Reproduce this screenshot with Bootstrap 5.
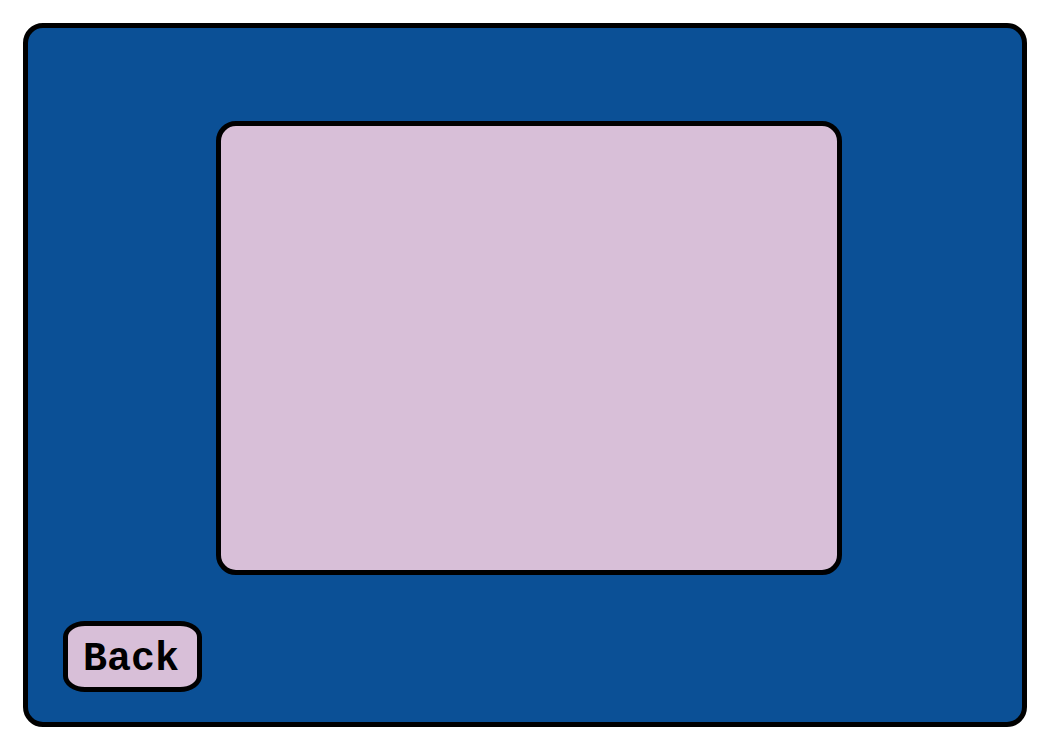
<!DOCTYPE html>
<html lang="en">
<head>
<meta charset="utf-8">
<meta name="viewport" content="width=device-width, initial-scale=1">
<title>Back</title>
<link href="https://cdn.jsdelivr.net/npm/bootstrap@5.3.0/dist/css/bootstrap.min.css" rel="stylesheet">
<style>
  .screen { padding: 23px; background: #fff; }
  .game-frame {
    padding: 93px 180px 30px 188px;
    background: #0b5096;
    border: 5px solid #000;
    border-radius: 20px;
  }
  .stage {
    background: #d8bfd8;
    border: 5px solid #000;
    border-radius: 20px;
    margin-bottom: 46px;
  }
  .back-row { margin-left: -153px; }
  .btn-back {
    padding: 11px 18px 5px 15px;
    background: #d8bfd8;
    color: #000;
    border: 5px solid #000;
    border-radius: 22px / 16px;
    font: bold 40px/45px "Liberation Mono", monospace;
  }
  .btn-back:hover, .btn-back:active { background: #e6d3e6; color: #000; border-color: #000; }
</style>
</head>
<body>
<main class="screen d-flex min-vh-100">
  <div class="game-frame d-flex flex-column flex-fill">
    <section class="stage flex-fill" aria-label="Stage"></section>
    <div class="back-row d-flex">
      <button type="button" class="btn btn-back">Back</button>
    </div>
  </div>
</main>
<script src="https://cdn.jsdelivr.net/npm/bootstrap@5.3.0/dist/js/bootstrap.bundle.min.js"></script>
</body>
</html>
